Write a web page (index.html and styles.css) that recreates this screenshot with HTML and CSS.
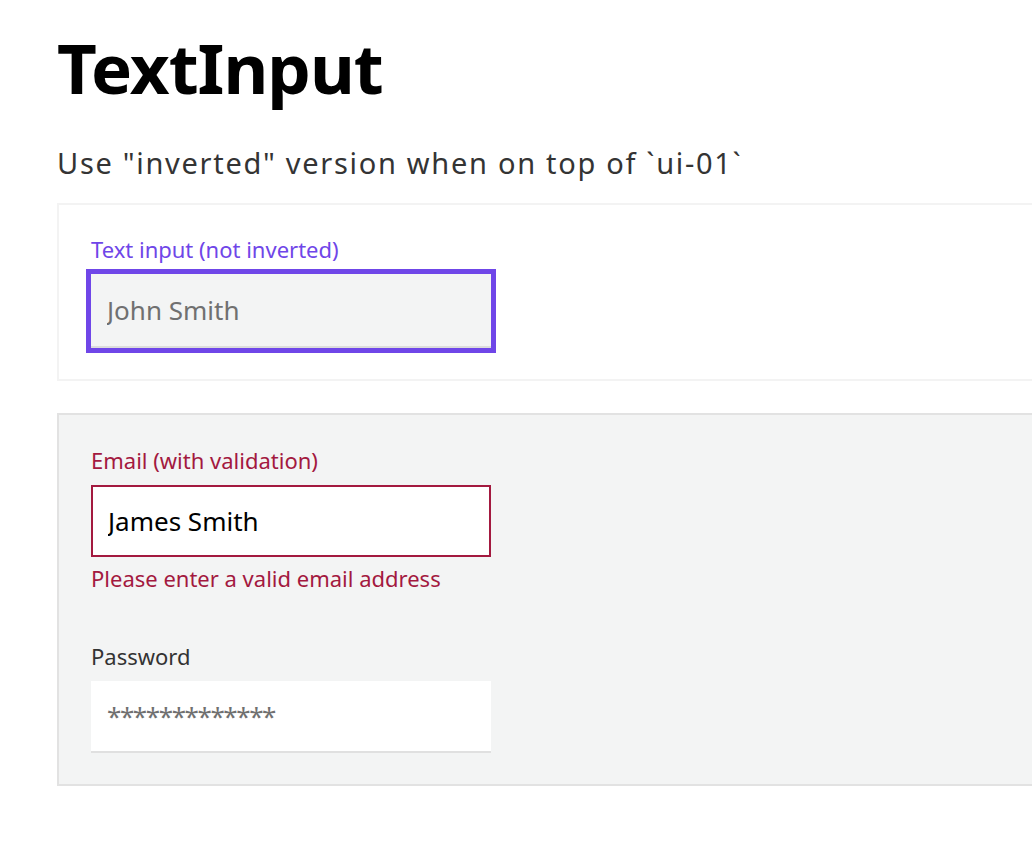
FILE: index.html
```html
<!DOCTYPE html>
<html lang="en">
<head>
<meta charset="utf-8">
<title>TextInput</title>
<link rel="stylesheet" href="styles.css">
</head>
<body>
<main class="page">
  <h1 class="title">TextInput</h1>
  <p class="subtitle">Use "inverted" version when on top of `ui-01`</p>

  <section class="card card-light">
    <div class="field">
      <label class="label label-focus" for="name">Text input (not inverted)</label>
      <input class="input input-gray input-focus" id="name" type="text" placeholder="John Smith">
    </div>
  </section>

  <section class="card card-gray">
    <div class="field">
      <label class="label label-error" for="email">Email (with validation)</label>
      <input class="input input-white input-error" id="email" type="text" value="James Smith">
      <div class="error-text">Please enter a valid email address</div>
    </div>
    <div class="field field-password">
      <label class="label" for="pw">Password</label>
      <input class="input input-white input-password" id="pw" type="text" placeholder="*************">
    </div>
  </section>
</main>
</body>
</html>
```

FILE: styles.css
```css
html, body {
  margin: 0;
  padding: 0;
  background: #ffffff;
  overflow: hidden;
}

body {
  font-family: "Noto Sans", "Open Sans", sans-serif;
  color: #393939;
}

.page {
  padding: 0 0 0 57px;
  width: 1100px;
}

.title {
  margin: 0;
  padding-top: 23px;
  font-size: 69px;
  line-height: 88px;
  font-weight: 700;
  color: #000000;
  letter-spacing: -1px;
}

.subtitle {
  margin: 34px 0 0 0;
  font-size: 29px;
  line-height: 36px;
  color: #343434;
  letter-spacing: 1.7px;
}

.card {
  box-sizing: border-box;
  width: 1100px;
}

.card-light {
  margin-top: 22px;
  background: #ffffff;
  border: 2px solid #f3f3f3;
  padding: 29px 0 31px 32px;
}

.card-gray {
  margin-top: 32px;
  background: #f3f4f4;
  border: 2px solid #e2e2e2;
  padding: 30px 0 31px 32px;
}

.field {
  display: flex;
  flex-direction: column;
  align-items: flex-start;
}

.field-password {
  margin-top: 48px;
}

.label {
  font-size: 22px;
  line-height: 30px;
  color: #333333;
  margin-bottom: 10px;
}

.label-focus { color: #6f46e8; }
.label-error { color: #a3193f; }

.input {
  box-sizing: border-box;
  width: 400px;
  height: 72px;
  border: none;
  padding: 0 16px;
  font-family: inherit;
  font-size: 26px;
  color: #000000;
  outline: none;
}

.input::placeholder { color: #707070; opacity: 1; }

.input-gray {
  background: #f3f4f4;
  border-bottom: 2px solid #dcdcdc;
}

.input-focus {
  height: 74px;
  outline: 5px solid #6f46e8;
  outline-offset: 0;
}

.input-white {
  background: #ffffff;
  border-bottom: 2px solid #e0e0e0;
}

.input-password {
  letter-spacing: -1.4px;
}

.input-error {
  border: 2px solid #a3193f;
  padding-left: 15px;
}

.error-text {
  margin-top: 6px;
  font-size: 22px;
  line-height: 30px;
  color: #a3193f;
}
```
